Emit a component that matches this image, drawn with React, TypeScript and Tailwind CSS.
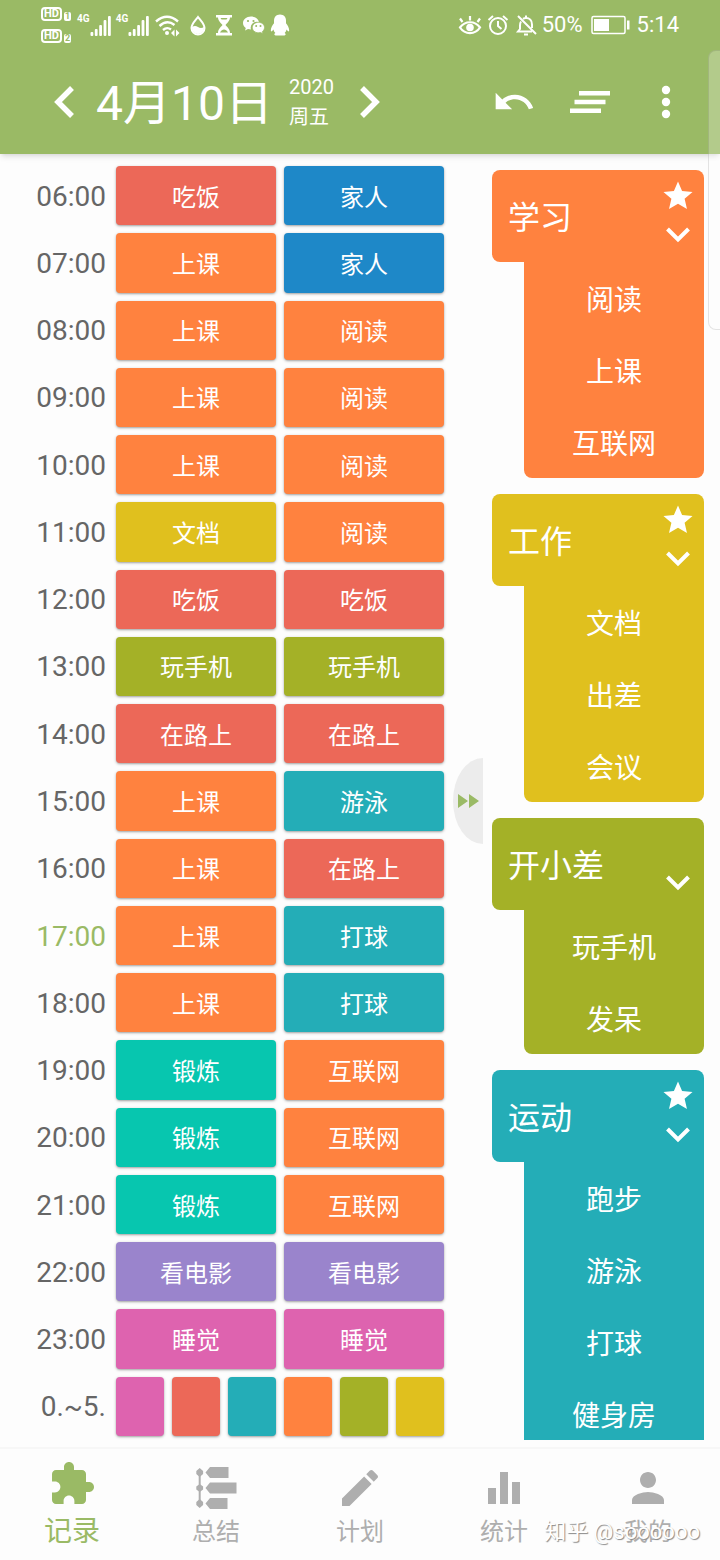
import React, { useState } from 'react';

type Tone = 'red' | 'blue' | 'orange' | 'yellow' | 'olive' | 'teal' | 'mint' | 'purple' | 'pink';

const tones: Record<Tone, string> = {
  red: 'bg-[#ec6858]',
  blue: 'bg-[#1e88c8]',
  orange: 'bg-[#ff823f]',
  yellow: 'bg-[#e0c01e]',
  olive: 'bg-[#a4b127]',
  teal: 'bg-[#24adb7]',
  mint: 'bg-[#07c6af]',
  purple: 'bg-[#9a84cc]',
  pink: 'bg-[#de63af]',
};

const toneOf: Record<string, Tone> = {
  吃饭: 'red',
  在路上: 'red',
  家人: 'blue',
  上课: 'orange',
  阅读: 'orange',
  互联网: 'orange',
  文档: 'yellow',
  玩手机: 'olive',
  游泳: 'teal',
  打球: 'teal',
  锻炼: 'mint',
  看电影: 'purple',
  睡觉: 'pink',
};

const hours: [string, string, string][] = [
  ['06:00', '吃饭', '家人'],
  ['07:00', '上课', '家人'],
  ['08:00', '上课', '阅读'],
  ['09:00', '上课', '阅读'],
  ['10:00', '上课', '阅读'],
  ['11:00', '文档', '阅读'],
  ['12:00', '吃饭', '吃饭'],
  ['13:00', '玩手机', '玩手机'],
  ['14:00', '在路上', '在路上'],
  ['15:00', '上课', '游泳'],
  ['16:00', '上课', '在路上'],
  ['17:00', '上课', '打球'],
  ['18:00', '上课', '打球'],
  ['19:00', '锻炼', '互联网'],
  ['20:00', '锻炼', '互联网'],
  ['21:00', '锻炼', '互联网'],
  ['22:00', '看电影', '看电影'],
  ['23:00', '睡觉', '睡觉'],
];

const night: Tone[] = ['pink', 'red', 'teal', 'orange', 'olive', 'yellow'];

const groups: { name: string; tone: Tone; starred: boolean; items: string[] }[] = [
  { name: '学习', tone: 'orange', starred: true, items: ['阅读', '上课', '互联网'] },
  { name: '工作', tone: 'yellow', starred: true, items: ['文档', '出差', '会议'] },
  { name: '开小差', tone: 'olive', starred: false, items: ['玩手机', '发呆'] },
  { name: '运动', tone: 'teal', starred: true, items: ['跑步', '游泳', '打球', '健身房'] },
];

function HdBadge({ n }: { n: number }) {
  return (
    <span className="flex items-end gap-0.5">
      <span className="rounded-sm border-2 border-white px-px text-[11px] leading-[10px] font-bold">HD</span>
      <span className="rounded-xs bg-white px-px text-[9px] leading-[9px] font-bold text-[#9aba65]">{n}</span>
    </span>
  );
}

function Signal() {
  return (
    <span className="flex items-start">
      <span className="text-[10px] leading-3 font-bold">4G</span>
      <svg className="h-6 w-[22px]" viewBox="0 0 22 24" fill="currentColor">
        <rect x="0.500" y="19" width="2.800" height="4" rx="1" />
        <rect x="4.800" y="16" width="2.800" height="7" rx="1" />
        <rect x="9.200" y="12" width="2.800" height="11" rx="1" />
        <rect x="13.600" y="7" width="2.800" height="16" rx="1" />
        <rect x="18" y="3" width="2.800" height="20" rx="1" />
      </svg>
    </span>
  );
}

function StatusBar() {
  return (
    <div className="flex h-[50px] items-center justify-between px-[41px]">
      <div className="flex items-center gap-1">
        <div className="mr-0.5 flex flex-col gap-2">
          <HdBadge n={1} />
          <HdBadge n={2} />
        </div>
        <Signal />
        <Signal />
        <svg className="h-6 w-7" viewBox="0 0 28 24" fill="none" stroke="currentColor" strokeWidth="2.4">
          <path d="M2 8.500Q13 -1 24 8.500" />
          <path d="M5.500 13Q13 6 20.500 12" />
          <path d="M9 17Q13 13.500 17 16.500" />
          <circle cx="13" cy="20" r="2" fill="currentColor" stroke="none" />
          <path d="M20.500 16.500v7l-3.500-3.500zM22 16.500v7l3.500-3.500z" fill="currentColor" stroke="none" />
        </svg>
        <svg className="ml-1 h-6 w-4" viewBox="0 0 16 24" fill="none">
          <path d="M8 4C5 8 1.500 11 1.500 15a6.500 6.500 0 0 0 13 0C14.500 11 11 8 8 4z" stroke="currentColor" strokeWidth="2" />
          <path d="M2 14q3-2 6 0t6 0v1a6 6 0 0 1-12 0z" fill="currentColor" />
        </svg>
        <svg className="ml-1 h-6 w-5" viewBox="0 0 20 24">
          <path d="M2 2h16v2.500H2zM2 20h16v2.500H2z" fill="currentColor" />
          <path d="M4 4h12c0 4-3 6-4.500 8 1.500 2 4.500 4 4.500 8H4c0-4 3-6 4.500-8C7 10 4 8 4 4z" fill="currentColor" />
          <path d="M6 19.500c1-2 2.500-3 4-3s3 1 4 3z" fill="#9aba65" />
          <path d="M6.500 5h7l-1 1.500h-5z" fill="#9aba65" />
        </svg>
        <svg className="ml-1 h-6 w-6" viewBox="0 0 24 24" fill="currentColor">
          <path d="M9 3.500c-4.700 0-8 3-8 6.500 0 2 1 3.700 2.800 5L3 17.500l3-1.400c1 .3 2 .4 3 .4a6 6 0 0 1 8-7.300C16.500 6 13 3.500 9 3.500z" />
          <path d="M22.500 14.500c0-3-2.800-5.200-6.100-5.200s-6.100 2.300-6.100 5.200 2.700 5.300 6.100 5.300c.8 0 1.500-.1 2.200-.3l2.400 1.200-.6-2.100c1.300-1 2.100-2.500 2.100-4.100z" stroke="#9aba65" strokeWidth="0.800" />
          <g fill="#9aba65">
            <circle cx="6" cy="8" r="1.100" />
            <circle cx="11.500" cy="8" r="1.100" />
            <circle cx="14.200" cy="13" r="1" />
            <circle cx="18.500" cy="13" r="1" />
          </g>
        </svg>
        <svg className="h-6 w-5" viewBox="0 0 20 24" fill="currentColor">
          <path d="M10 1.500c-4 0-6 2.800-6 6.200v2.500C2.500 12 .8 15 .8 17.300c0 1.200.7 1.400 1.400.7l1.200-1.500c.3 1.500 1 2.700 2 3.600-1.300.5-1.600 2.400.2 2.400h8.800c1.800 0 1.500-1.900.2-2.400 1-.9 1.700-2.100 2-3.600l1.200 1.500c.7.7 1.400.5 1.400-.7 0-2.300-1.700-5.300-3.200-7.100V7.700c0-3.400-2-6.200-6-6.200z" />
        </svg>
      </div>
      <div className="flex items-center gap-1">
        <svg className="h-6 w-6" viewBox="0 0 24 24" fill="none" stroke="currentColor" strokeWidth="2.200">
          <path d="M2 14.500C7 7.500 17 7.500 22 14.500 17 22 7 22 2 14.500zM4.500 9L2 5.500M12 7.500V3M19.500 9L22 5.500" />
          <circle cx="12" cy="14.500" r="3.800" fill="currentColor" stroke="none" />
        </svg>
        <svg className="h-6 w-6" viewBox="0 0 24 24" fill="none" stroke="currentColor" strokeWidth="2">
          <circle cx="12" cy="13" r="8" />
          <path d="M12 8v5l3.500 3M2.500 7L7 3M21.500 7L17 3" />
        </svg>
        <svg className="h-6 w-6" viewBox="0 0 24 24" fill="none" stroke="currentColor" strokeWidth="2">
          <path d="M4 3l18 18M7 8.500c-.7 1.200-1 2.500-1 4V16l-2 2.500h14M9 5.800C9.800 5.300 11 5 12 5c3.500 0 6 2.500 6 6.500v3.500M12 2.500V5M10 21.500h4" />
        </svg>
        <span className="text-[22px] leading-6">50%</span>
        <svg className="ml-1 h-6 w-10" viewBox="0 0 40 24" fill="none">
          <rect x="1" y="3.500" width="33" height="17" rx="1.500" stroke="currentColor" strokeWidth="1.500" />
          <rect x="3" y="6" width="15" height="12" fill="currentColor" />
          <rect x="36" y="7.500" width="2.500" height="9" fill="currentColor" />
        </svg>
        <span className="ml-0.5 text-[22px] leading-6">5:14</span>
      </div>
    </div>
  );
}

function Header() {
  return (
    <header className="z-10 shrink-0 bg-[#9aba65] text-white shadow-md">
      <StatusBar />
      <div className="flex h-[104px] items-center justify-between pr-8 pl-10">
        <div className="flex items-center">
          <button aria-label="前一天" className="flex w-12 justify-center">
            <svg className="h-8 w-6" viewBox="0 0 24 32" fill="none" stroke="currentColor" strokeWidth="5.500">
              <path d="M20 2L6 16l14 14" />
            </svg>
          </button>
          <h1 className="ml-2 pt-1 text-5xl">4月10日</h1>
          <div className="ml-4 flex flex-col text-xl leading-[30px]">
            <span>2020</span>
            <span>周五</span>
          </div>
          <button aria-label="后一天" className="ml-3 flex w-12 justify-center">
            <svg className="h-8 w-6" viewBox="0 0 24 32" fill="none" stroke="currentColor" strokeWidth="5.500">
              <path d="M4 2l14 14L4 30" />
            </svg>
          </button>
        </div>
        <div className="flex items-center gap-8">
          <button aria-label="撤销">
            <svg className="h-11 w-11" viewBox="0 0 24 24" fill="currentColor">
              <path d="M12.500 8c-2.650 0-5.050.99-6.900 2.600L2 7v9h9l-3.620-3.620c1.390-1.160 3.160-1.880 5.120-1.880 3.540 0 6.550 2.310 7.600 5.500l2.370-.78C21.080 11.030 17.150 8 12.500 8z" />
            </svg>
          </button>
          <button aria-label="清空" className="flex w-11 justify-center">
            <svg className="h-10 w-10" viewBox="0 0 40 40" fill="currentColor">
              <path d="M9 9h31v4.500H9zM4.500 17.700h31v4.500h-31zM0 26.500h31V31H0z" />
            </svg>
          </button>
          <button aria-label="更多" className="flex w-11 justify-center">
            <svg className="h-10 w-3" viewBox="0 0 12 40" fill="currentColor">
              <circle cx="6" cy="8" r="4.200" />
              <circle cx="6" cy="20" r="4.200" />
              <circle cx="6" cy="32" r="4.200" />
            </svg>
          </button>
        </div>
      </div>
    </header>
  );
}

function Schedule() {
  return (
    <section className="grid flex-1 auto-rows-fr gap-2 pt-3 pb-[11px]">
      {hours.map(([time, first, second]) => (
        <div key={time} className="flex gap-2">
          <div
            className={`flex w-[108px] shrink-0 items-center justify-end pt-0.5 pr-0.5 text-[28px] leading-8 ${
              time === '17:00' ? 'text-[#9aba65]' : 'text-[#666666]'
            }`}
          >
            {time}
          </div>
          {[first, second].map((label, i) => (
            <button
              key={i}
              className={`flex-1 rounded-sm pt-1 text-2xl text-white shadow-sm shadow-black/30 ${tones[toneOf[label]]}`}
            >
              {label}
            </button>
          ))}
        </div>
      ))}
      <div className="flex gap-2">
        <div className="flex w-[108px] shrink-0 items-center justify-end pt-0.5 pr-0.5 text-[28px] leading-8 text-[#666666]">
          0.~5.
        </div>
        {night.map((tone, i) => (
          <button
            key={tone}
            aria-label={`${i}:00`}
            className={`flex-1 rounded-sm shadow-sm shadow-black/30 ${tones[tone]}`}
          />
        ))}
      </div>
    </section>
  );
}

function Categories() {
  return (
    <aside className="mb-[7px] flex w-[212px] shrink-0 flex-col gap-4 overflow-hidden pt-4 text-white">
      {groups.map((g) => (
        <section key={g.name} className="shrink-0">
          <div
            className={`flex h-[92px] items-center justify-between rounded-t-lg rounded-bl-lg pr-2 pl-4 ${tones[g.tone]}`}
          >
            <h2 className="pt-1 text-[32px] leading-10">{g.name}</h2>
            <div className="flex h-full w-9 flex-col items-center justify-end gap-3 pb-[18px]">
              {g.starred && (
                <svg className="h-8 w-8" viewBox="1 1 22 22" fill="currentColor">
                  <path d="M12 17.270L18.180 21l-1.640-7.030L22 9.240l-7.190-.61L12 2 9.190 8.630 2 9.240l5.460 4.730L5.820 21z" />
                </svg>
              )}
              <button aria-label={`收起${g.name}`}>
                <svg className="h-5 w-7" viewBox="0 0 28 20" fill="none" stroke="currentColor" strokeWidth="4">
                  <path d="M3.500 5L14 15.500 24.500 5" />
                </svg>
              </button>
            </div>
          </div>
          <ul className={`ml-8 rounded-b-lg ${tones[g.tone]}`}>
            {g.items.map((item) => (
              <li key={item}>
                <button className="h-[72px] w-full pt-1.5 text-[28px] leading-8">{item}</button>
              </li>
            ))}
          </ul>
        </section>
      ))}
    </aside>
  );
}

const tabs = [
  {
    name: '记录',
    icon: (
      <svg className="h-12 w-12" viewBox="0 0 24 24" fill="currentColor">
        <path d="M20.500 11H19V7c0-1.100-.9-2-2-2h-4V3.500C13 2.120 11.880 1 10.500 1S8 2.120 8 3.500V5H4c-1.100 0-1.990.9-1.990 2v3.800H3.500c1.490 0 2.700 1.210 2.700 2.700s-1.210 2.700-2.700 2.700H2V20c0 1.100.9 2 2 2h3.800v-1.500c0-1.490 1.210-2.700 2.700-2.700 1.490 0 2.700 1.210 2.700 2.700V22H17c1.100 0 2-.9 2-2v-4h1.500c1.380 0 2.500-1.120 2.500-2.500S21.880 11 20.500 11z" />
      </svg>
    ),
  },
  {
    name: '总结',
    icon: (
      <svg className="h-12 w-12" viewBox="0 0 48 48" fill="currentColor">
        <path d="M6.700 7h2v34h-2z" />
        <path d="M7.700 4l3.400 3v3l-3.400 3-3.400-3V7zM7.700 20l3.400 2.500v3L7.700 28l-3.400-2.500v-3zM7.700 35l3.400 3v3l-3.400 3-3.400-3v-3z" />
        <path d="M18 3h18.500v11H18l-4.500-5.500zM18 18.500h26.500v11H18L13.500 24zM18 34h17.500v11H18l-4.500-5.500z" />
      </svg>
    ),
  },
  {
    name: '计划',
    icon: (
      <svg className="h-12 w-12" viewBox="0 0 24 24" fill="currentColor">
        <path d="M3 17.250V21h3.750L17.810 9.940l-3.750-3.750L3 17.250zM20.710 7.040c.39-.39.39-1.020 0-1.410l-2.340-2.340c-.39-.39-1.020-.39-1.410 0l-1.830 1.830 3.750 3.750 1.830-1.830z" />
      </svg>
    ),
  },
  {
    name: '统计',
    icon: (
      <svg className="h-12 w-12" viewBox="0 0 48 48" fill="currentColor">
        <path d="M8 24h8v16H8zM20 8h8v32h-8zM32 18h8v22h-8z" />
      </svg>
    ),
  },
  {
    name: '我的',
    icon: (
      <svg className="h-12 w-12" viewBox="0 0 24 24" fill="currentColor">
        <path d="M12 12c2.210 0 4-1.790 4-4s-1.790-4-4-4-4 1.790-4 4 1.790 4 4 4zm0 2c-2.670 0-8 1.340-8 4v2h16v-2c0-2.660-5.330-4-8-4z" />
      </svg>
    ),
  },
];

export default function App() {
  const [active, setActive] = useState('记录');

  return (
    <div className="relative flex h-screen flex-col overflow-hidden bg-[#fdfdfd] font-[Roboto,'Noto_Sans_CJK_SC',sans-serif]">
      <Header />

      <main className="flex min-h-0 flex-1">
        <Schedule />
        <div className="flex w-12 shrink-0 items-center justify-end pr-[9px]">
          <button
            aria-label="展开"
            className="flex h-[86px] w-[30px] items-center justify-center rounded-[100%_0_0_100%/50%] bg-[#ececec] text-[#9aba65]"
          >
            <svg className="h-4 w-6" viewBox="0 0 24 16" fill="currentColor">
              <path d="M2 1l10 7-10 7zM13 1l10 7-10 7z" />
            </svg>
          </button>
        </div>
        <Categories />
        <div className="w-4 shrink-0" />
      </main>

      {/* Bottom tabs */}
      <nav className="relative grid h-[113px] shrink-0 grid-cols-5 border-t-2 border-[#f7f7f7]">
        {tabs.map((tab) => (
          <button
            key={tab.name}
            onClick={() => setActive(tab.name)}
            className={`flex flex-col items-center justify-end pb-3 ${
              active === tab.name ? 'gap-2 text-[28px] text-[#9aba65]' : 'gap-1 text-2xl text-[#aeaeae]'
            }`}
          >
            {tab.icon}
            <span className="leading-8">{tab.name}</span>
          </button>
        ))}
        <span className="pointer-events-none absolute right-5 bottom-3 text-[22px] leading-8 text-white [text-shadow:1px_1px_1px_#888888]">
          知乎 @soooooo
        </span>
      </nav>

      {/* Edge drawer peeking in from the right */}
      <div className="absolute top-[50px] right-0 z-20 h-[280px] w-3 rounded-l-lg border border-r-0 border-black/10 bg-white/25" />
    </div>
  );
}
